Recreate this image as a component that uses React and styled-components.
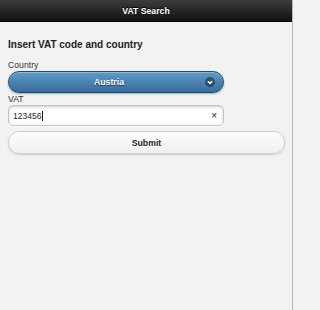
import React from "react";
import styled, { createGlobalStyle } from "styled-components";

const Global = createGlobalStyle`
  html, body { margin: 0; padding: 0; background: #f2f2f2; }
  body { font-family: "Liberation Sans", Arial, Helvetica, sans-serif; }
  #root { width: 293px; height: 310px; }
`;

const Page = styled.div`
  box-sizing: border-box;
  width: 293px;
  height: 310px;
  background: #f2f2f2;
  border-right: 1px solid #b9b9b9;
  display: flex;
  flex-direction: column;
`;

const Header = styled.div`
  height: 22px;
  flex: none;
  background: linear-gradient(#3c3c3c, #111);
  border-bottom: 1px solid #000;
  box-sizing: border-box;
  display: flex;
  align-items: center;
  justify-content: center;
  color: #fff;
  font-weight: bold;
  font-size: 8.7px;
  text-shadow: 0 -1px 1px #000;
`;

const Content = styled.div`
  padding: 17px 8px 0 8px;
  display: flex;
  flex-direction: column;
`;

const Heading = styled.h3`
  margin: 0 0 10px 0;
  font-size: 10px;
  line-height: 12px;
  font-weight: bold;
  color: #222;
`;

const Label = styled.label`
  font-size: 8.7px;
  line-height: 9px;
  color: #333;
  margin-bottom: 1px;
`;

const SelectButton = styled.div`
  box-sizing: border-box;
  width: 216px;
  height: 22px;
  border-radius: 11px;
  border: 1px solid #145072;
  background: linear-gradient(#5f9cc5, #396b9e);
  box-shadow: 0 1px 2px rgba(0,0,0,.3), inset 0 1px 0 rgba(255,255,255,.3);
  position: relative;
  display: flex;
  align-items: center;
  justify-content: center;
  padding-right: 14px;
  color: #fff;
  font-weight: bold;
  font-size: 8.7px;
  text-shadow: 0 1px 1px #0d3a5a;
  margin-bottom: 2px;
`;

const IconCircle = styled.span`
  position: absolute;
  right: 8px;
  top: 50%;
  margin-top: -5px;
  width: 10px;
  height: 10px;
  border-radius: 50%;
  background: rgba(0, 0, 0, 0.4);
  display: flex;
  align-items: center;
  justify-content: center;
`;

const InputWrap = styled.div`
  box-sizing: border-box;
  width: 216px;
  height: 21px;
  border-radius: 5px;
  border: 1px solid #c4c4c4;
  background: #fff;
  box-shadow: inset 0 1px 3px rgba(0,0,0,.2), 0 1px 0 #fff;
  display: flex;
  align-items: center;
  padding: 0 6px 0 4px;
  margin-top: 0px;
  margin-bottom: 5px;
`;

const InputText = styled.span`
  flex: 1;
  font-size: 8.5px;
  color: #222;
  display: flex;
  align-items: center;
`;

const Caret = styled.span`
  display: inline-block;
  width: 1px;
  height: 10px;
  background: #222;
  margin-left: 1px;
`;

const Clear = styled.span`
  font-size: 10px;
  color: #222;
  line-height: 10px;
`;

const SubmitButton = styled.div`
  box-sizing: border-box;
  width: 277px;
  height: 23px;
  border-radius: 11px;
  border: 1px solid #cfcfcf;
  background: linear-gradient(#fefefe, #efefef);
  box-shadow: 0 1px 2px rgba(0,0,0,.15);
  display: flex;
  align-items: center;
  justify-content: center;
  font-weight: bold;
  font-size: 8.7px;
  color: #222;
  text-shadow: 0 1px 0 #fff;
`;

export default function App() {
  return (
    <>
      <Global />
      <Page>
        <Header>VAT Search</Header>
        <Content>
          <Heading>Insert VAT code and country</Heading>
          <Label>Country</Label>
          <SelectButton>
            Austria
            <IconCircle>
              <svg width="6" height="5" viewBox="0 0 6 5">
                <path d="M0.8 1.2 L3 3.4 L5.2 1.2" fill="none" stroke="#fff" strokeWidth="1.5" />
              </svg>
            </IconCircle>
          </SelectButton>
          <Label>VAT</Label>
          <InputWrap>
            <InputText>123456<Caret /></InputText>
            <Clear>×</Clear>
          </InputWrap>
          <SubmitButton>Submit</SubmitButton>
        </Content>
      </Page>
    </>
  );
}
